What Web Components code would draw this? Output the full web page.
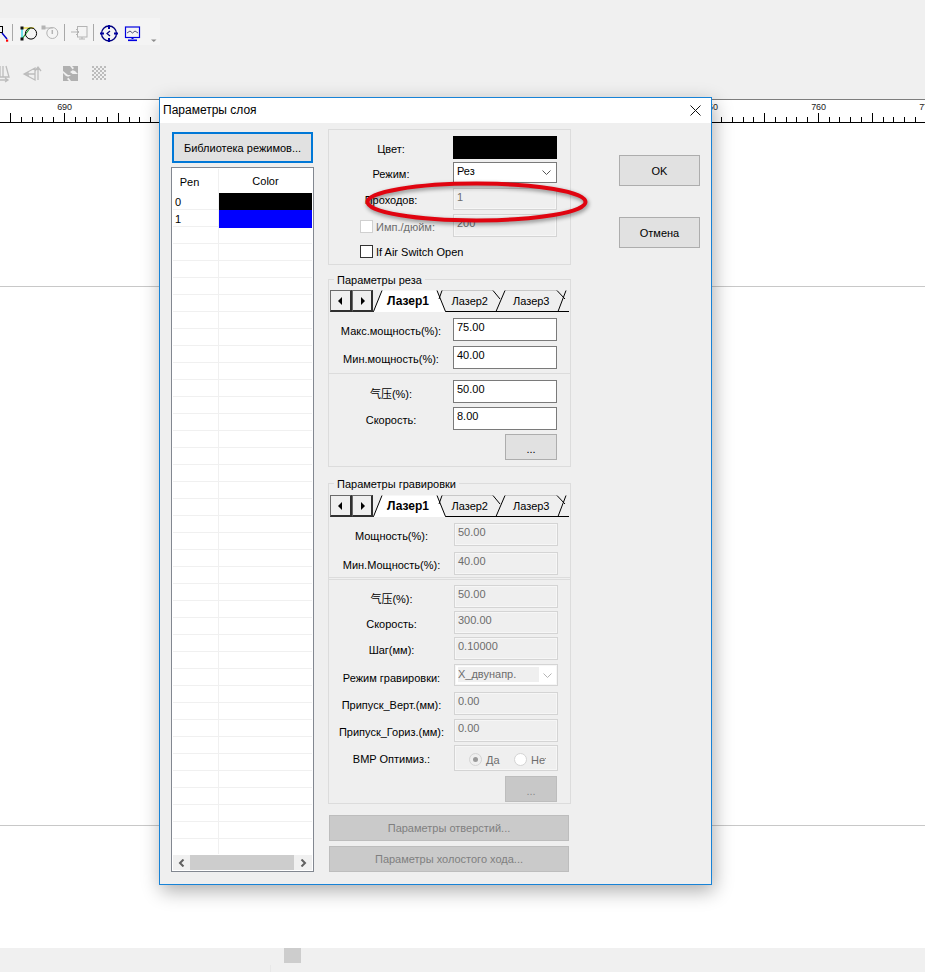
<!DOCTYPE html>
<html lang="ru">
<head>
<meta charset="utf-8">
<title>Параметры слоя</title>
<style>
  html, body { margin: 0; padding: 0; }
  body {
    position: relative;
    width: 925px;
    height: 972px;
    overflow: hidden;
    background: #fff;
    font: 11px "Liberation Sans", "Noto Sans CJK SC", sans-serif;
    color: #000;
  }
</style>
</head>
<body>
<cad-workspace></cad-workspace>

<layer-dialog heading="Параметры слоя">
  <pen-table slot="left"></pen-table>

  <group-box slot="middle" pad="6">
    <field-row label="Цвет:" kind="swatch" h="23" style="margin-top:6px"></field-row>
    <field-row label="Режим:" kind="combo" value="Рез" h="21" style="margin-top:3px"></field-row>
    <field-row label="Проходов:" value="1" disabled h="22" style="margin-top:5px"></field-row>
    <field-row label="Имп./дюйм:" value="200" disabled check h="23" style="margin-top:4px"></field-row>
    <check-line style="margin-top:8px">If Air Switch Open</check-line>
  </group-box>

  <group-box slot="middle" legend="Параметры реза" pad="6" style="margin-top:14px">
    <tab-strip style="margin-top:10px"></tab-strip>
    <field-row label="Макс.мощность(%):" value="75.00" style="margin-top:6px"></field-row>
    <field-row label="Мин.мощность(%):" value="40.00" style="margin-top:5px"></field-row>
    <rule-line style="margin-top:4px"></rule-line>
    <field-row label="气压(%):" value="50.00" style="margin-top:6px"></field-row>
    <field-row label="Скорость:" value="8.00" style="margin-top:4px"></field-row>
    <dots-button style="margin-top:4px"></dots-button>
  </group-box>

  <group-box slot="middle" legend="Параметры гравировки" pad="1" style="margin-top:16px; --label-w:125px">
    <tab-strip style="margin-top:11px"></tab-strip>
    <field-row label="Мощность(%):" value="50.00" disabled style="margin-top:6px"></field-row>
    <field-row label="Мин.Мощность(%):" value="40.00" disabled style="margin-top:6px"></field-row>
    <rule-line double style="margin-top:2px"></rule-line>
    <field-row label="气压(%):" value="50.00" disabled style="margin-top:5px"></field-row>
    <field-row label="Скорость:" value="300.00" disabled style="margin-top:3px"></field-row>
    <field-row label="Шаг(мм):" value="0.10000" disabled style="margin-top:3px"></field-row>
    <field-row label="Режим гравировки:" kind="combo" value="X_двунапр." disabled h="22" style="margin-top:4px"></field-row>
    <field-row label="Припуск_Верт.(мм):" value="0.00" disabled style="margin-top:6px"></field-row>
    <field-row label="Припуск_Гориз.(мм):" value="0.00" disabled style="margin-top:4px"></field-row>
    <field-row label="BMP Оптимиз.:" kind="radio" disabled h="26" style="margin-top:3px"></field-row>
    <dots-button disabled style="margin-top:5px"></dots-button>
  </group-box>

  <win-button slot="middle" flat style="margin:11px 0 0 1px; width:240px; height:26px">Параметры отверстий...</win-button>
  <win-button slot="middle" flat style="margin:5px 0 0 1px; width:240px; height:26px">Параметры холостого хода...</win-button>

  <win-button slot="right" style="width:81px; height:31px">OK</win-button>
  <win-button slot="right" style="width:81px; height:31px; margin-top:31px">Отмена</win-button>
</layer-dialog>

<red-ellipse></red-ellipse>

<script>
class CadWorkspace extends HTMLElement {
  constructor() {
    super();
    this.attachShadow({ mode: "open" });
  }

  connectedCallback() {
    this.shadowRoot.innerHTML = `
      <style>
        :host { display: flex; flex-direction: column; width: 925px; height: 972px; background: #f0f0f0; }
        .tools { height: 99px; flex: none; padding-top: 18px; box-sizing: border-box; }
        .box { display: block; width: 160px; height: 27px; background: #f4f4f4; }
        .row2 { display: block; margin-top: 15px; }
        .ruler { display: block; flex: none; border-top: 1px solid #7d7d7d; background: #fff; height: 23px; }
        .ruler text { font: 9px "Liberation Sans", sans-serif; letter-spacing: -0.2px; fill: #222; text-anchor: middle; }
        .sheet { background: #fff; height: 163px; flex: none; border-bottom: 1px solid #c8c8c8; }
        .sheet.mid { height: 538px; }
        .sheet.end { flex: 1; border: 0; }
        .hbar { height: 15px; flex: none; background: #f0f0f0; padding-left: 284px; }
        .hbar i { display: block; width: 17px; height: 15px; background: #cdcdcd; }
        .status { height: 7px; flex: none; margin-top: 2px; background: #f0f0f0; }
        .status i { display: block; width: 270px; height: 7px; border-right: 1px solid #e8e8e8; }
      </style>
      <div class="tools">
        <svg class="box" width="160" height="27" viewBox="0 18 160 27">
          <g fill="none" stroke-width="1">
            <rect x="-2.5" y="26.5" width="5" height="6" stroke="#000"/>
            <path d="M2 33l5 6" stroke="#0000c8" stroke-width="1.4"/>
            <rect x="6" y="39.5" width="2.2" height="2.2" fill="#f00"/>
            <path d="M12.5 24v17M64.5 24v17M93.5 24v17" stroke="#a8a8a8"/>
            <path d="M22 29v10" stroke="#19d3e6" stroke-width="1.2"/>
            <path d="M22 28h12" stroke="#e2d21e" stroke-width="1.2"/>
            <path d="M22 39l8-11" stroke="#159a2e" stroke-width="1.2"/>
            <circle cx="31" cy="33.5" r="5.6" stroke="#000"/>
            <rect x="20.5" y="26.5" width="3" height="3" fill="#111" stroke="none"/>
            <rect x="20.5" y="37.5" width="3" height="3" fill="#111" stroke="none"/>
            <g stroke="#b4b4b4">
              <rect x="42" y="26" width="3" height="3" fill="#b4b4b4"/>
              <path d="M45 28h8"/>
              <circle cx="52.3" cy="33" r="5.5"/>
              <path d="M52.3 30v4" stroke-width="1.5"/>
              <rect x="77.5" y="26.5" width="9.5" height="10.5"/>
              <path d="M71 32h8M76 29l3 3-3 3M79 39h6M82 37v2" />
            </g>
            <circle cx="109" cy="33.5" r="7.5" stroke="#000080" stroke-width="1.3"/>
            <path d="M109 25v4M109 38v4M100 33.5h4M114 33.5h4" stroke="#0000a0" stroke-width="2"/>
            <path d="M110 31l-3 2.5 3 2.5" stroke="#000080" stroke-width="1.2"/>
            <rect x="125.5" y="27" width="14" height="10.5" stroke="#0000e0" stroke-width="1.2"/>
            <path d="M127 33l3-2 2.5 2 2.5-2 3 2" stroke="#55557a"/>
            <path d="M132.5 38v1" stroke="#0000e0" stroke-width="2"/>
            <path d="M128 40.3h9" stroke="#0000e0" stroke-width="1.6"/>
            <path d="M151 39.5h5.5l-2.7 2.6z" fill="#8c8c8c"/>
          </g>
        </svg>
        <svg class="row2" width="160" height="25" viewBox="0 60 160 25">
          <defs>
            <pattern id="chk" width="4" height="4" patternUnits="userSpaceOnUse" x="92" y="66">
              <rect width="2" height="2" fill="#bcbcbc"/>
              <rect x="2" y="2" width="2" height="2" fill="#bcbcbc"/>
            </pattern>
          </defs>
          <g fill="none" stroke="#bcbcbc" stroke-width="1.3">
            <path d="M0 66v11M3 66v11M6 66l3 11H0M0 80h7M5 78l3 2-3 2"/>
            <path d="M24 74l11-6v12zM24 74h11M28 72v4M38 68v12M35 71l3-4 3 4"/>
          </g>
          <path d="M63 66h7l3 4-3 2 4 3-6 0-5-4zM78 66v8l-3-3-3-1 2-2-2-2zM63 81v-8l3 3 3 1-2 2 2 2zM78 81h-7l-3-4 3-2 1-1 6 0z" fill="#b0b0b0"/>
          <rect x="92" y="66" width="14" height="14" fill="url(#chk)"/>
        </svg>
      </div>
      <svg class="ruler" width="925" height="23" id="ruler"></svg>
      <div class="sheet"></div>
      <div class="sheet mid"></div>
      <div class="sheet end"></div>
      <div class="hbar"><i></i></div>
      <div class="status"><i></i></div>
    `;
    this.drawRuler();
  }

  drawRuler() {
    // 10 units = 107.7px, a tick per unit, a long one each 5
    const step = 10.77;
    let d = "M0 22.5H925";
    let labels = "";
    for (let i = -6; i <= 80; i++) {
      const x = Math.round(64 + i * step) + 0.5;
      d += `M${x} ${i % 5 === 0 ? 13 : 17}V22`;
      // 700-740 sit behind the dialog
      if (i % 10 === 0 && (i < 10 || i > 50)) {
        labels += `<text x="${x}" y="10">${690 + i}</text>`;
      }
    }
    this.shadowRoot.getElementById("ruler").innerHTML =
      `<path d="${d}" stroke="#000" fill="none"/>${labels}`;
  }
}

class LayerDialog extends HTMLElement {
  constructor() {
    super();
    this.attachShadow({ mode: "open" });
  }

  connectedCallback() {
    this.shadowRoot.innerHTML = `
      <style>
        :host {
          position: absolute;
          left: 159px;
          top: 97px;
          width: 553px;
          height: 788px;
          box-sizing: border-box;
          display: flex;
          flex-direction: column;
          border: 1px solid #1883d7;
          background: #efefef;
          box-shadow: 2px 6px 18px rgba(0, 0, 0, 0.32);
        }
        header {
          height: 25px;
          box-sizing: border-box;
          flex: none;
          background: #fff;
          font-size: 12px;
          display: flex;
          align-items: center;
          justify-content: space-between;
          padding: 0 10px 1px 3px;
        }
        header svg { display: block; }
        .body { display: flex; padding-top: 6px; }
        .left { margin: 3px 0 0 11px; width: 143px; }
        .middle { margin-left: 14px; width: 243px; }
        .right { margin: 26px 0 0 48px; width: 81px; }
      </style>
      <header>
        <span>${this.getAttribute("heading")}</span>
        <svg width="11" height="11" viewBox="0 0 11 11"><path d="M0.5 0.5l10 10M10.5 0.5l-10 10" stroke="#111" fill="none"/></svg>
      </header>
      <div class="body">
        <div class="left"><slot name="left"></slot></div>
        <div class="middle"><slot name="middle"></slot></div>
        <div class="right"><slot name="right"></slot></div>
      </div>
    `;
  }
}

class PenTable extends HTMLElement {
  constructor() {
    super();
    this.attachShadow({ mode: "open" });
  }

  connectedCallback() {
    const colors = ["#000", "#0000ff"];
    let rows = "";
    for (let i = 0; i < 39; i++) {
      const pen = i < colors.length ? i : "";
      const fill = i < colors.length ? `background:${colors[i]}` : "";
      rows += `<div class="row"><span class="pen">${pen}</span><span class="col" style="${fill}"></span></div>`;
    }
    this.shadowRoot.innerHTML = `
      <style>
        :host { display: block; }
        button {
          display: block;
          width: 141px;
          height: 31px;
          margin: 0 0 4px 1px;
          padding: 0;
          box-sizing: border-box;
          border: 2px solid #0078d7;
          background: #e1e1e1;
          font: inherit;
          color: #000;
        }
        .table {
          height: 705px;
          box-sizing: border-box;
          border: 1px solid #828790;
          background: #fff;
          padding: 0 1px 1px;
          display: flex;
          flex-direction: column;
        }
        .head, .row { display: grid; grid-template-columns: 46px 93px; }
        .head { height: 25px; flex: none; text-align: center; line-height: 26px; }
        .head span:first-child { border-right: 1px solid #f0f0f0; margin-top: 1px; padding-right: 12px; }
        .rows { flex: 1; overflow: hidden; }
        .row { height: 17px; box-sizing: border-box; border-bottom: 1px solid #f0f0f0; }
        .pen { border-right: 1px solid #f0f0f0; padding-left: 2px; line-height: 18px; }
        .bar { flex: none; height: 15px; background: #f0f0f0; margin-top: 1px; padding: 0 18px 0 17px; position: relative; }
        .bar i { display: block; height: 15px; background: #cdcdcd; }
        .bar svg { position: absolute; top: 4px; }
      </style>
      <button>Библиотека режимов...</button>
      <div class="table">
        <div class="head"><span>Pen</span><span>Color</span></div>
        <div class="rows">${rows}</div>
        <div class="bar">
          <svg style="left:5px" width="7" height="8" viewBox="0 0 7 8"><path d="M5.5 0.5L2 4l3.5 3.5" stroke="#606060" stroke-width="2" fill="none"/></svg>
          <i></i>
          <svg style="right:5px" width="7" height="8" viewBox="0 0 7 8"><path d="M1.5 0.5L5 4 1.5 7.5" stroke="#606060" stroke-width="2" fill="none"/></svg>
        </div>
      </div>
    `;
  }
}

class GroupBox extends HTMLElement {
  constructor() {
    super();
    this.attachShadow({ mode: "open" });
  }

  connectedCallback() {
    const legend = this.getAttribute("legend");
    this.shadowRoot.innerHTML = `
      <style>
        :host {
          display: block;
          position: relative;
          border: 1px solid #dcdcdc;
          padding-bottom: ${this.getAttribute("pad") || 0}px;
        }
        .legend {
          position: absolute;
          left: 5px;
          top: -7px;
          padding: 0 3px;
          background: #efefef;
          line-height: 15px;
        }
      </style>
      ${legend ? `<span class="legend">${legend}</span>` : ""}
      <slot></slot>
    `;
  }
}

class FieldRow extends HTMLElement {
  constructor() {
    super();
    this.attachShadow({ mode: "open" });
  }

  connectedCallback() {
    const kind = this.getAttribute("kind") || "input";
    const off = this.hasAttribute("disabled");
    const value = this.getAttribute("value") || "";
    const label = this.getAttribute("label");
    const h = this.getAttribute("h") || 23;
    const chevron = `<svg class="chev" width="9" height="6" viewBox="0 0 9 6"><path d="M0.5 0.5L4.5 4.5l4-4" fill="none" stroke="${off ? "#b4b4b4" : "#555"}"/></svg>`;
    let field = `<div class="field">${value}</div>`;
    if (kind === "swatch") field = `<div class="swatch"></div>`;
    if (kind === "combo") {
      field = `<div class="field combo"><span class="sel">${value}</span>${chevron}</div>`;
    }
    if (kind === "radio") {
      field = `<div class="field radios">
        <i class="dot on"></i><span class="opt">Да</span>
        <i class="dot"></i><span class="opt cut">Нет</span>
      </div>`;
    }
    const box = this.hasAttribute("check") ? `<i class="box"></i>` : "";
    const labelTop = off && kind === "combo" ? 5 : 2;
    this.shadowRoot.innerHTML = `
      <style>
        :host {
          display: grid;
          grid-template-columns: var(--label-w, 124px) 104px;
          height: ${h}px;
        }
        .label {
          display: flex;
          align-items: center;
          justify-content: center;
          padding-top: ${labelTop}px;
          white-space: nowrap;
          gap: 3px;
        }
        :host([check]) .label { color: #6d6d6d; justify-content: flex-start; padding-left: 31px; }
        .box { width: 11px; height: 11px; border: 1px solid #d0d0d0; background: #fff; }
        .field {
          box-sizing: border-box;
          height: ${h}px;
          border: 1px solid #7a7a7a;
          background: #fff;
          padding: 0 3px;
          line-height: 16px;
          color: #000;
          overflow: hidden;
          white-space: nowrap;
        }
        :host([disabled]) .field {
          border: 1px solid #d4d4d4;
          box-shadow: inset 0 0 0 1px #f6f6f6;
          background: #efefef;
          color: #6d6d6d;
        }
        .swatch { background: #000; height: ${h}px; }
        .combo { display: flex; align-items: flex-start; justify-content: space-between; padding-right: 5px; }
        .combo .chev { margin-top: 7px; flex: none; }
        :host([disabled]) .combo { background: #fff; }
        :host([disabled]) .combo .chev { margin-top: 8px; }
        :host([disabled]) .sel { background: #efefef; width: 81px; margin-top: 2px; line-height: 15px; }
        .radios { display: flex; align-items: center; padding: 3px 0 0 14px; }
        .dot { flex: none; width: 11px; height: 11px; border: 1px solid #d4d4d4; border-radius: 50%; background: #fff; }
        .dot.on { background: #efefef; position: relative; }
        .dot.on::after { content: ""; position: absolute; left: 3px; top: 3px; width: 5px; height: 5px; border-radius: 50%; background: #9a9a9a; }
        .opt { margin-left: 4px; width: 28px; }
        .opt.cut { width: 15px; overflow: hidden; }
      </style>
      <div class="label">${box}<span>${label}</span></div>
      ${field}
    `;
  }
}

class CheckLine extends HTMLElement {
  constructor() {
    super();
    this.attachShadow({ mode: "open" });
    this.shadowRoot.innerHTML = `
      <style>
        :host { display: flex; align-items: center; height: 13px; padding-left: 31px; gap: 3px; white-space: nowrap; }
        i { width: 11px; height: 11px; border: 1px solid #333; background: #fff; }
      </style>
      <i></i><slot></slot>
    `;
  }
}

class RuleLine extends HTMLElement {
  constructor() {
    super();
    this.attachShadow({ mode: "open" });
    this.shadowRoot.innerHTML = `
      <style>
        :host { display: block; height: 1px; background: #dcdcdc; }
        :host([double]) { background: none; border-top: 1px solid #dcdcdc; border-bottom: 1px solid #dcdcdc; }
      </style>
    `;
  }
}

class TabStrip extends HTMLElement {
  constructor() {
    super();
    this.attachShadow({ mode: "open" });
    this.shadowRoot.innerHTML = `
      <style>
        :host { display: flex; height: 22px; padding-left: 1px; }
        .arrows { display: flex; flex: none; }
        .arrow {
          width: 22px;
          height: 22px;
          box-sizing: border-box;
          background: #efefef;
          border-style: solid;
          border-color: #6a6a6a #303030 #303030 #6a6a6a;
          border-width: 1px 2px 2px 1px;
          display: flex;
          align-items: center;
          justify-content: center;
        }
        .arrow + .arrow { width: 21px; }
        svg.tabs { display: block; flex: none; }
        text { font: 11px "Liberation Sans", sans-serif; fill: #000; }
        .on { font-size: 12px; font-weight: 700; }
      </style>
      <div class="arrows">
        <div class="arrow"><svg width="5" height="8"><path d="M4 0v8L0 4z"/></svg></div>
        <div class="arrow"><svg width="5" height="8"><path d="M1 0v8l4-4z"/></svg></div>
      </div>
      <svg class="tabs" width="196" height="22" viewBox="0 0 196 22">
        <path d="M0 21.5H196" stroke="#000" fill="none"/>
        <path d="M69 0.5H120M132 0.5H184" stroke="#c8c8c8" fill="none"/>
        <path d="M0.5 22L9 0.5H64L72.5 22z" fill="#fff"/>
        <path d="M0.5 21.5L9 0.5M64 0.5L72.5 21.5M69 0.5L66 9M120 0.5L127 9M132 0.5L123 21.5M184 0.5L192 9M193 0.5L185 21.5" stroke="#000" fill="none"/>
        <text class="on" x="14" y="15">Лазер1</text>
        <text x="78.5" y="15">Лазер2</text>
        <text x="140" y="15">Лазер3</text>
      </svg>
    `;
  }
}

class WinButton extends HTMLElement {
  constructor() {
    super();
    this.attachShadow({ mode: "open" });
    this.shadowRoot.innerHTML = `
      <style>
        :host {
          display: flex;
          align-items: center;
          justify-content: center;
          box-sizing: border-box;
          border: 1px solid #adadad;
          background: #e1e1e1;
          color: #000;
        }
        :host([flat]) { background: #cacaca; border-color: #bdbdbd; color: #7f7f7f; }
      </style>
      <slot></slot>
    `;
  }
}

class DotsButton extends HTMLElement {
  constructor() {
    super();
    this.attachShadow({ mode: "open" });
    this.shadowRoot.innerHTML = `
      <style>
        :host { display: flex; justify-content: flex-end; padding-right: 13px; }
        div {
          width: 52px;
          height: 26px;
          box-sizing: border-box;
          border: 1px solid #adadad;
          background: #e1e1e1;
          text-align: center;
          line-height: 28px;
        }
        :host([disabled]) div { background: #c8c8c8; border-color: #bdbdbd; color: #8a8a8a; }
      </style>
      <div>...</div>
    `;
  }
}

class RedEllipse extends HTMLElement {
  constructor() {
    super();
    this.attachShadow({ mode: "open" });
    this.shadowRoot.innerHTML = `
      <style>
        :host { position: absolute; left: 355px; top: 172px; width: 250px; height: 62px; }
        svg { display: block; filter: drop-shadow(1px 2px 2px rgba(0, 0, 0, 0.45)); }
      </style>
      <svg width="250" height="62" viewBox="355 172 250 62">
        <ellipse cx="476.5" cy="202" rx="109" ry="18.5" fill="none" stroke="#e00410" stroke-width="4"/>
      </svg>
    `;
  }
}

customElements.define("cad-workspace", CadWorkspace);
customElements.define("layer-dialog", LayerDialog);
customElements.define("pen-table", PenTable);
customElements.define("group-box", GroupBox);
customElements.define("field-row", FieldRow);
customElements.define("check-line", CheckLine);
customElements.define("rule-line", RuleLine);
customElements.define("tab-strip", TabStrip);
customElements.define("win-button", WinButton);
customElements.define("dots-button", DotsButton);
customElements.define("red-ellipse", RedEllipse);
</script>
</body>
</html>
